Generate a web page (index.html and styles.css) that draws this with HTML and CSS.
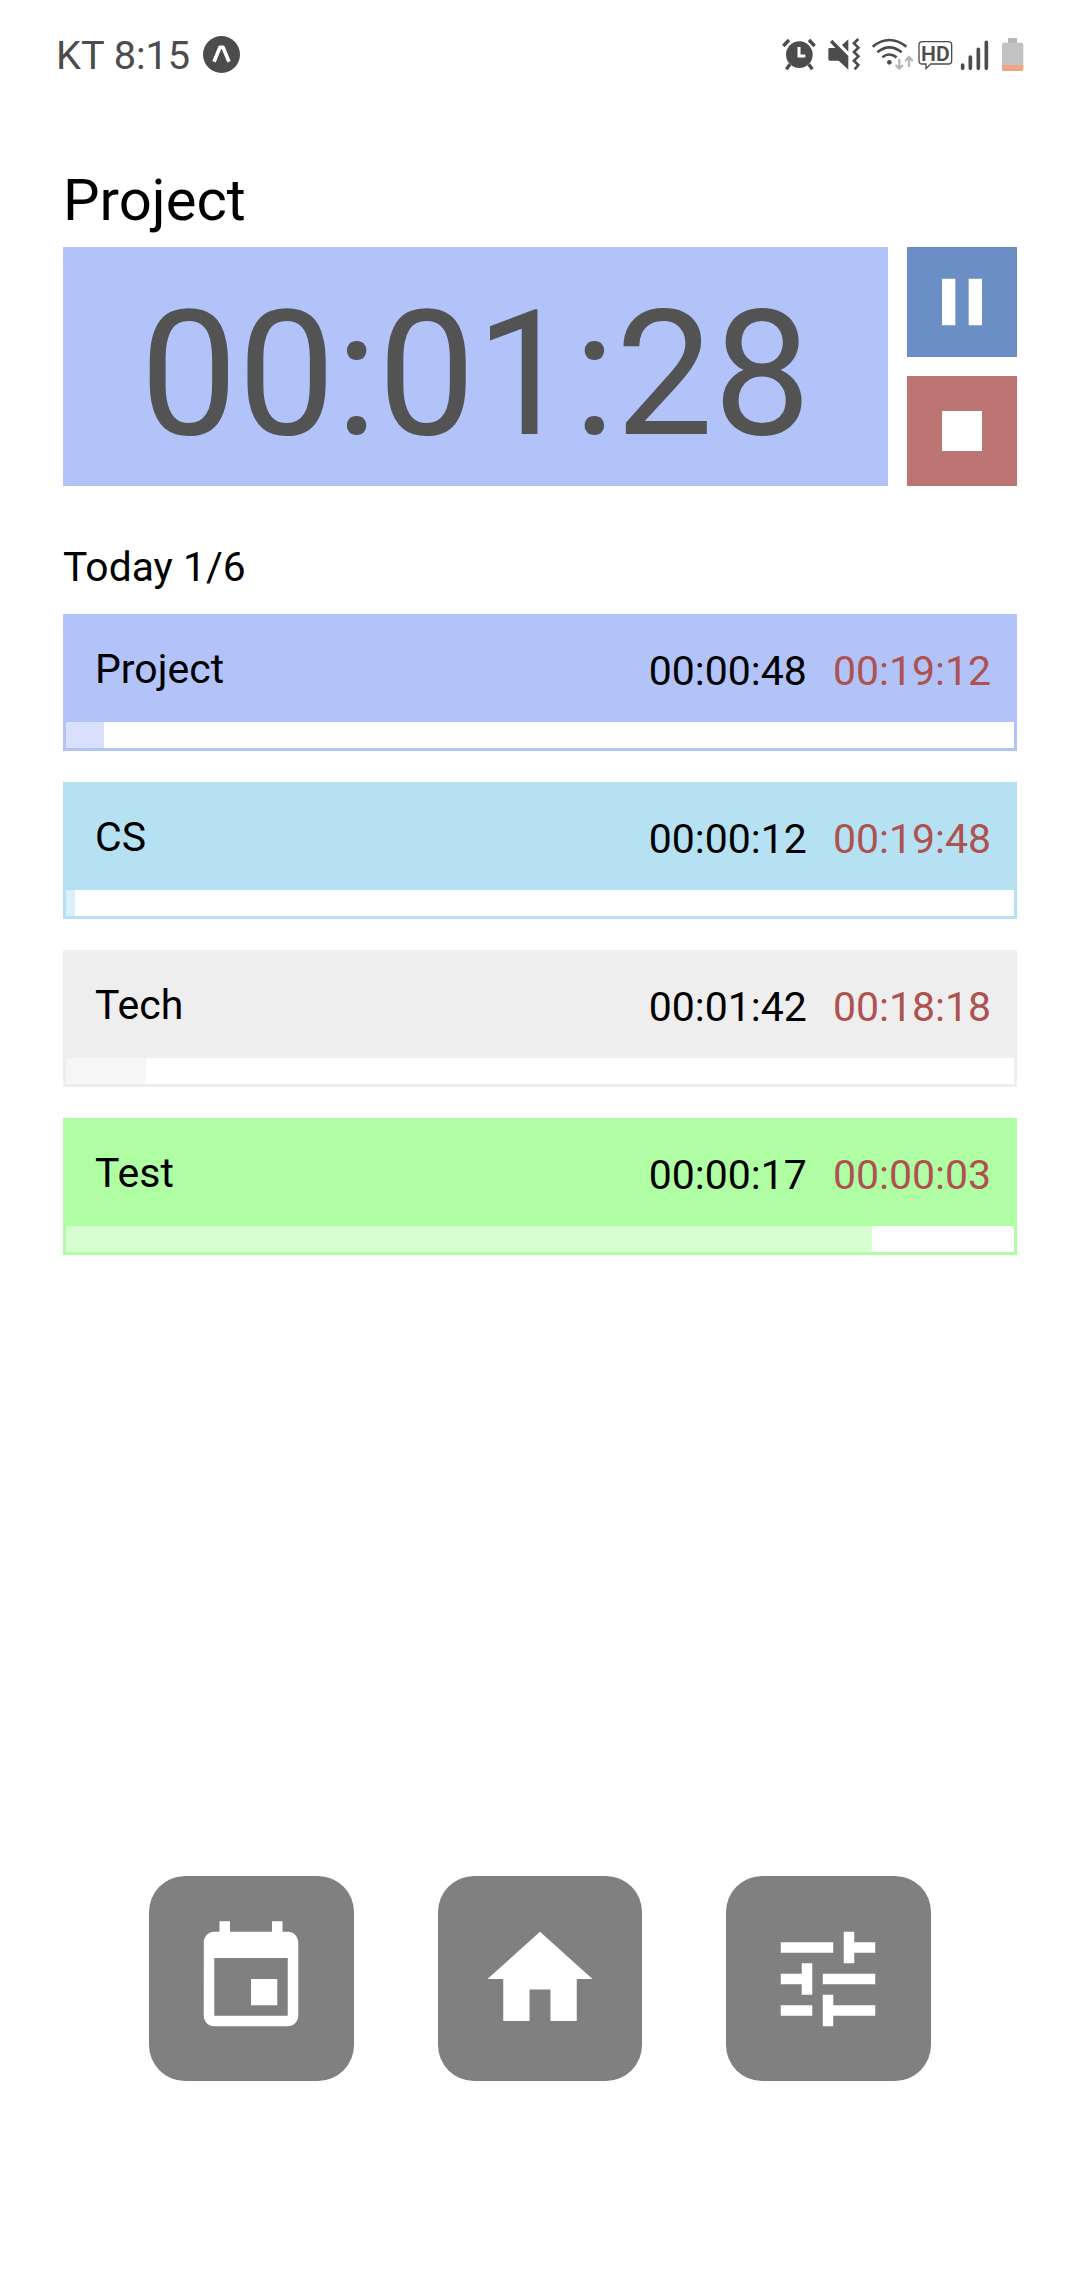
FILE: index.html
```html
<!DOCTYPE html>
<html lang="en">
<head>
<meta charset="utf-8">
<title>Project timer</title>
<link rel="stylesheet" href="styles.css">
</head>
<body>
<header class="status">
  <span class="carrier">KT 8:15</span>
  <svg class="expo" viewBox="0 0 37 37"><circle cx="18.5" cy="18.5" r="18.5" fill="#4c4c4c"/><path d="M11 25.8 17 11.200h3L26 25.800" fill="none" stroke="#fff" stroke-width="3.600" stroke-linejoin="round"/></svg>
  <div class="status-icons">
    <svg class="alarm" viewBox="36 45 102 108"><circle cx="88" cy="101" r="40"/><path d="M40 75 57 57M117 57l17 18M60 130l-11 15M116 130l11 15" fill="none" stroke="#4c4c4c" stroke-width="10"/><path d="M87 78v27h19" fill="none" stroke="#fff" stroke-width="9"/></svg>
    <svg class="mute" viewBox="174 45 96 108"><path d="M175 85q0-4 4-4h17L180 64l7-8 48 49v41l-29-27h-27q-4 0-4-4zM216 72l19-17v37z"/><path d="M265 54 252 67l13 13-13 13 13 13-13 13 13 13-11 13" fill="none" stroke="#4c4c4c" stroke-width="8"/></svg>
    <svg class="wifi" viewBox="303 45 129 108"><g fill="none" stroke="#4c4c4c" stroke-width="8"><path d="M308 77Q358 37 409 77M322 94q36-30 73 0M337 109q21-17 43 0"/></g><circle cx="358" cy="124" r="7"/><path d="M388 114v29M377 132l11 11 11-11M417 138v-29M406 120l11-12 11 12" fill="none" stroke="#b7b7b7" stroke-width="7"/></svg>
    <svg class="hd" viewBox="444 45 105 108"><path d="M457 62h78q10 0 10 10v47q0 10-10 10h-53l-14 14v-14h-11q-10 0-10-10V72q0-10 10-10z" fill="none" stroke="#4c4c4c" stroke-width="4"/><text x="496" y="119" text-anchor="middle" textLength="86" lengthAdjust="spacingAndGlyphs">HD</text></svg>
    <svg class="signal" viewBox="570 45 87 108"><path d="M578 132v10M601 108v34M625 85v57M649 64v78" fill="none" stroke="#4c4c4c" stroke-width="11" stroke-linecap="round"/></svg>
    <svg class="battery" viewBox="693 45 69 108"><path d="M714 52h27v13h14q5 0 5 5v62h-64V70q0-5 5-5h13z" fill="#c2c2c2"/><path d="M714 52h27v13h-27z" fill="#b4b4b4"/><path d="M696 132h64v13q0 5-5 5h-54q-5 0-5-5z" fill="#f0a385"/></svg>
  </div>
</header>
<main class="content">
  <h1 class="title">Project</h1>
  <section class="timer">
    <div class="clock">00:01:28</div>
    <div class="controls">
      <button class="control pause" aria-label="Pause"><svg viewBox="0 0 24 24"><path d="M6 19h4V5H6v14zm8-14v14h4V5h-4z"/></svg></button>
      <button class="control stop" aria-label="Stop"><svg viewBox="0 0 24 24"><path d="M6 6h12v12H6z"/></svg></button>
    </div>
  </section>
  <h2 class="today">Today 1/6</h2>
  <ul class="tasks">
    <li class="task blue"><div class="row"><span class="name">Project</span><span class="spent">00:00:48</span><span class="left">00:19:12</span></div><div class="track"><div class="fill" style="width:4%"></div></div></li>
    <li class="task cyan"><div class="row"><span class="name">CS</span><span class="spent">00:00:12</span><span class="left">00:19:48</span></div><div class="track"><div class="fill" style="width:1%"></div></div></li>
    <li class="task gray"><div class="row"><span class="name">Tech</span><span class="spent">00:01:42</span><span class="left">00:18:18</span></div><div class="track"><div class="fill" style="width:8.44%"></div></div></li>
    <li class="task green"><div class="row"><span class="name">Test</span><span class="spent">00:00:17</span><span class="left">00:00:03</span></div><div class="track"><div class="fill" style="width:85%"></div></div></li>
  </ul>
</main>
<nav class="nav">
  <button class="tab" aria-label="Calendar"><svg viewBox="0 0 24 24"><path d="M17 12h-5v5h5v-5zM16 1v2H8V1H6v2H5c-1.110 0-1.990.9-1.990 2L3 19c0 1.100.89 2 2 2h14c1.100 0 2-.9 2-2V5c0-1.100-.9-2-2-2h-1V1h-2zm3 18H5V8h14v11z"/></svg></button>
  <button class="tab" aria-label="Home"><svg viewBox="0 0 24 24"><path d="M10 20v-6h4v6h5v-8h3L12 3 2 12h3v8z"/></svg></button>
  <button class="tab" aria-label="Settings"><svg viewBox="0 0 24 24"><path d="M3 17v2h6v-2H3zM3 5v2h10V5H3zm10 16v-2h8v-2h-8v-2h-2v6h2zM7 9v2H3v2h4v2h2V9H7zm14 4v-2H11v2h10zm-6-4h2V7h4V5h-4V3h-2v6z"/></svg></button>
</nav>
</body>
</html>
```
FILE: styles.css
```css
* { box-sizing: border-box; margin: 0; padding: 0; }
body {
  width: 1080px;
  height: 2280px;
  display: flex;
  flex-direction: column;
  background: #fff;
  color: #000;
  font-family: Roboto, sans-serif;
  overflow: hidden;
}
button { border: 0; display: flex; align-items: center; justify-content: center; }
svg { display: block; flex: none; }

.status {
  height: 107px;
  padding: 0 56px 0 55px;
  display: flex;
  align-items: center;
  color: #4c4c4c;
}
.carrier { width: 148px; padding: 5px 0 0 1px; font-size: 39.7px; line-height: 48px; white-space: nowrap; }
.expo { width: 37px; height: 37px; margin-top: 2px; }
.status-icons { display: flex; margin-left: auto; }
.status-icons svg { height: 36px; fill: #4c4c4c; }
.alarm { width: 34px; margin-right: 12px; }
.mute { width: 32px; margin-right: 11px; }
.wifi { width: 43px; margin-right: 4px; }
.hd { width: 35px; margin-right: 7px; }
.hd text { font-size: 62px; font-weight: 600; }
.signal { width: 29px; margin-right: 12px; }
.battery { width: 23px; }

.content { padding: 0 63px; flex: 1; }
.title { height: 140px; padding-top: 58px; font-size: 58px; font-weight: 400; line-height: 70px; }
.timer { display: flex; justify-content: space-between; height: 239px; }
.clock {
  width: 825px;
  background: #b2c3fa;
  color: #535353;
  font-size: 174px;
  line-height: 256px;
  height: 239px;
  text-align: center;
}
.controls { display: flex; flex-direction: column; justify-content: space-between; }
.control { width: 110px; height: 110px; }
.control svg { width: 80px; height: 80px; fill: #fff; }
.pause { background: #6b8fc4; }
.stop { background: #bc7573; }

.today { height: 128px; padding-top: 56px; font-size: 40.8px; font-weight: 400; line-height: 50px; }
.tasks { list-style: none; display: flex; flex-direction: column; gap: 31px; }
.task { height: 137px; background: var(--color); border: 3px solid var(--color); border-top: 0; }
.row { height: 108px; padding: 0 23px 0 29px; display: flex; align-items: center; font-size: 41px; line-height: 48px; }
.name { flex: 1; padding-top: 2px; }
.spent, .left { padding-top: 5px; }
.left { margin-left: 26px; color: #ad524f; }
.track { height: 26px; background: #fff; }
.fill { height: 100%; background: var(--color); opacity: .51; }
.blue { --color: #b2c3fa; }
.cyan { --color: #b6e1f2; }
.gray { --color: #eeeeee; }
.green { --color: #b0fea4; }

.nav { display: grid; grid-template-columns: 205px 204px 205px; gap: 84px; margin: 0 149px 199px; }
.tab { height: 205px; border-radius: 36px; background: #808080; }
.tab svg { width: 126px; height: 126px; fill: #fff; }
.tab:not(:nth-child(2)) svg { margin-right: 1px; }
```
